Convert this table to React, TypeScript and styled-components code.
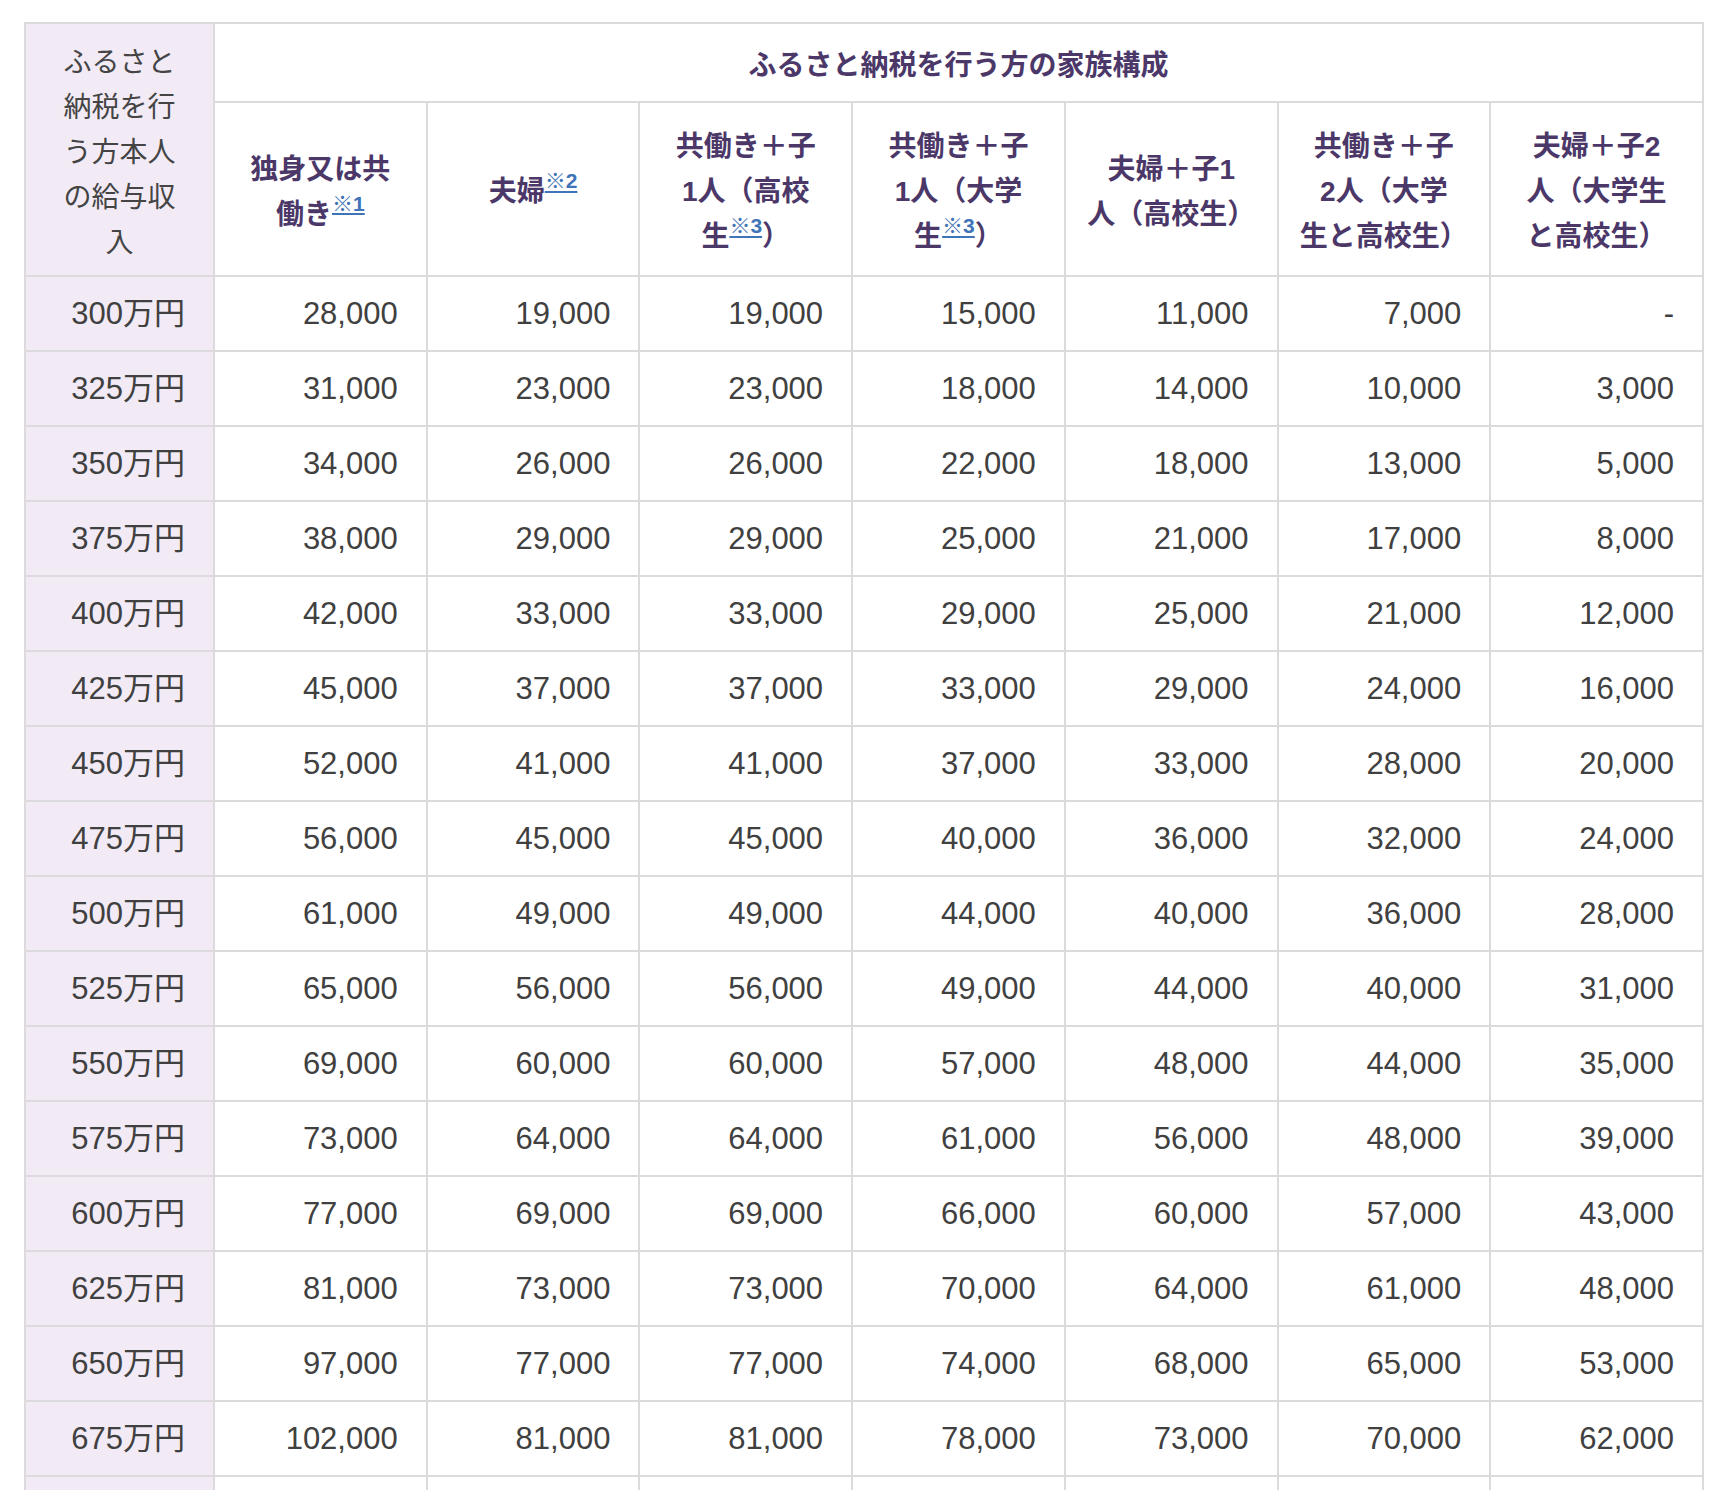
import React from 'react'
import styled, { createGlobalStyle } from 'styled-components'

// ── global ──────────────────────────────────────────────
const GlobalStyle = createGlobalStyle`
  html, body { margin: 0; padding: 0; background: #fff; }
  body {
    font-family: "Liberation Sans", "Noto Sans CJK JP", sans-serif;
    color: #3c3c3c;
  }
`

const Page = styled.div`
  padding: 22px 24px;
`

// ── table ───────────────────────────────────────────────
const Table = styled.table`
  width: 100%;
  border-collapse: collapse;
  table-layout: fixed;
  border: 2px solid #dcdadc;
`

const HeadCell = styled.th<{ $side?: boolean; $sub?: boolean }>`
  border: 2px solid #dcdadc;
  padding: ${({ $sub, $side }) => ($side ? '16px 20px 10px' : $sub ? '16px 20px 11px' : '17px 20px 11px')};
  font-size: 28px;
  line-height: 45px;
  text-align: center;
  vertical-align: middle;
  white-space: nowrap;
  font-weight: ${({ $side }) => ($side ? 400 : 700)};
  color: ${({ $side }) => ($side ? '#444' : '#4b3869')};
  background: ${({ $side }) => ($side ? '#f2ebf6' : '#fff')};
  font-family: "Liberation Sans", "Noto Sans CJK JP", sans-serif;
`

const Note = styled.a`
  font-size: 0.75em;
  vertical-align: 0.6em;
  line-height: 0;
  font-weight: 700;
  color: #3f74b8;
  text-decoration: underline;
  text-underline-offset: 2px;
`

const Cell = styled.td<{ $side?: boolean }>`
  border: 2px solid #dcdadc;
  padding: 14px 28px 14px 20px;
  font-size: 31px;
  line-height: 45px;
  text-align: right;
  white-space: nowrap;
  color: #404040;
  background: ${({ $side }) => ($side ? '#f2ebf6' : '#fff')};
`

type Head = { lines: React.ReactNode[] }

const heads: Head[] = [
  { lines: ['独身又は共', <>働き<Note href="#n1">※1</Note></>] },
  { lines: [<>夫婦<Note href="#n2">※2</Note></>] },
  { lines: ['共働き＋子', '1人（高校', <>生<Note href="#n3">※3</Note>）</>] },
  { lines: ['共働き＋子', '1人（大学', <>生<Note href="#n3">※3</Note>）</>] },
  { lines: ['夫婦＋子1', '人（高校生）'] },
  { lines: ['共働き＋子', '2人（大学', '生と高校生）'] },
  { lines: ['夫婦＋子2', '人（大学生', 'と高校生）'] },
]

const rows: [string, string[]][] = [
  ['300万円', ['28,000', '19,000', '19,000', '15,000', '11,000', '7,000', '-']],
  ['325万円', ['31,000', '23,000', '23,000', '18,000', '14,000', '10,000', '3,000']],
  ['350万円', ['34,000', '26,000', '26,000', '22,000', '18,000', '13,000', '5,000']],
  ['375万円', ['38,000', '29,000', '29,000', '25,000', '21,000', '17,000', '8,000']],
  ['400万円', ['42,000', '33,000', '33,000', '29,000', '25,000', '21,000', '12,000']],
  ['425万円', ['45,000', '37,000', '37,000', '33,000', '29,000', '24,000', '16,000']],
  ['450万円', ['52,000', '41,000', '41,000', '37,000', '33,000', '28,000', '20,000']],
  ['475万円', ['56,000', '45,000', '45,000', '40,000', '36,000', '32,000', '24,000']],
  ['500万円', ['61,000', '49,000', '49,000', '44,000', '40,000', '36,000', '28,000']],
  ['525万円', ['65,000', '56,000', '56,000', '49,000', '44,000', '40,000', '31,000']],
  ['550万円', ['69,000', '60,000', '60,000', '57,000', '48,000', '44,000', '35,000']],
  ['575万円', ['73,000', '64,000', '64,000', '61,000', '56,000', '48,000', '39,000']],
  ['600万円', ['77,000', '69,000', '69,000', '66,000', '60,000', '57,000', '43,000']],
  ['625万円', ['81,000', '73,000', '73,000', '70,000', '64,000', '61,000', '48,000']],
  ['650万円', ['97,000', '77,000', '77,000', '74,000', '68,000', '65,000', '53,000']],
  ['675万円', ['102,000', '81,000', '81,000', '78,000', '73,000', '70,000', '62,000']],
  ['700万円', ['108,000', '85,000', '85,000', '82,000', '77,000', '75,000', '66,000']],
]

export default function App() {
  return (
    <>
      <GlobalStyle />
      <Page>
        <Table>
          <colgroup>
            <col style={{ width: 189 }} />
            {heads.map((_, i) => <col key={i} />)}
          </colgroup>
          <thead>
            <tr>
              <HeadCell $side rowSpan={2}>
                ふるさと<br />納税を行<br />う方本人<br />の給与収<br />入
              </HeadCell>
              <HeadCell colSpan={7}>ふるさと納税を行う方の家族構成</HeadCell>
            </tr>
            <tr>
              {heads.map((h, i) => (
                <HeadCell $sub key={i}>
                  {h.lines.map((l, j) => (
                    <React.Fragment key={j}>
                      {j > 0 && <br />}
                      {l}
                    </React.Fragment>
                  ))}
                </HeadCell>
              ))}
            </tr>
          </thead>
          <tbody>
            {rows.map(([label, vals]) => (
              <tr key={label}>
                <Cell $side>{label}</Cell>
                {vals.map((v, i) => <Cell key={i}>{v}</Cell>)}
              </tr>
            ))}
          </tbody>
        </Table>
      </Page>
    </>
  )
}
